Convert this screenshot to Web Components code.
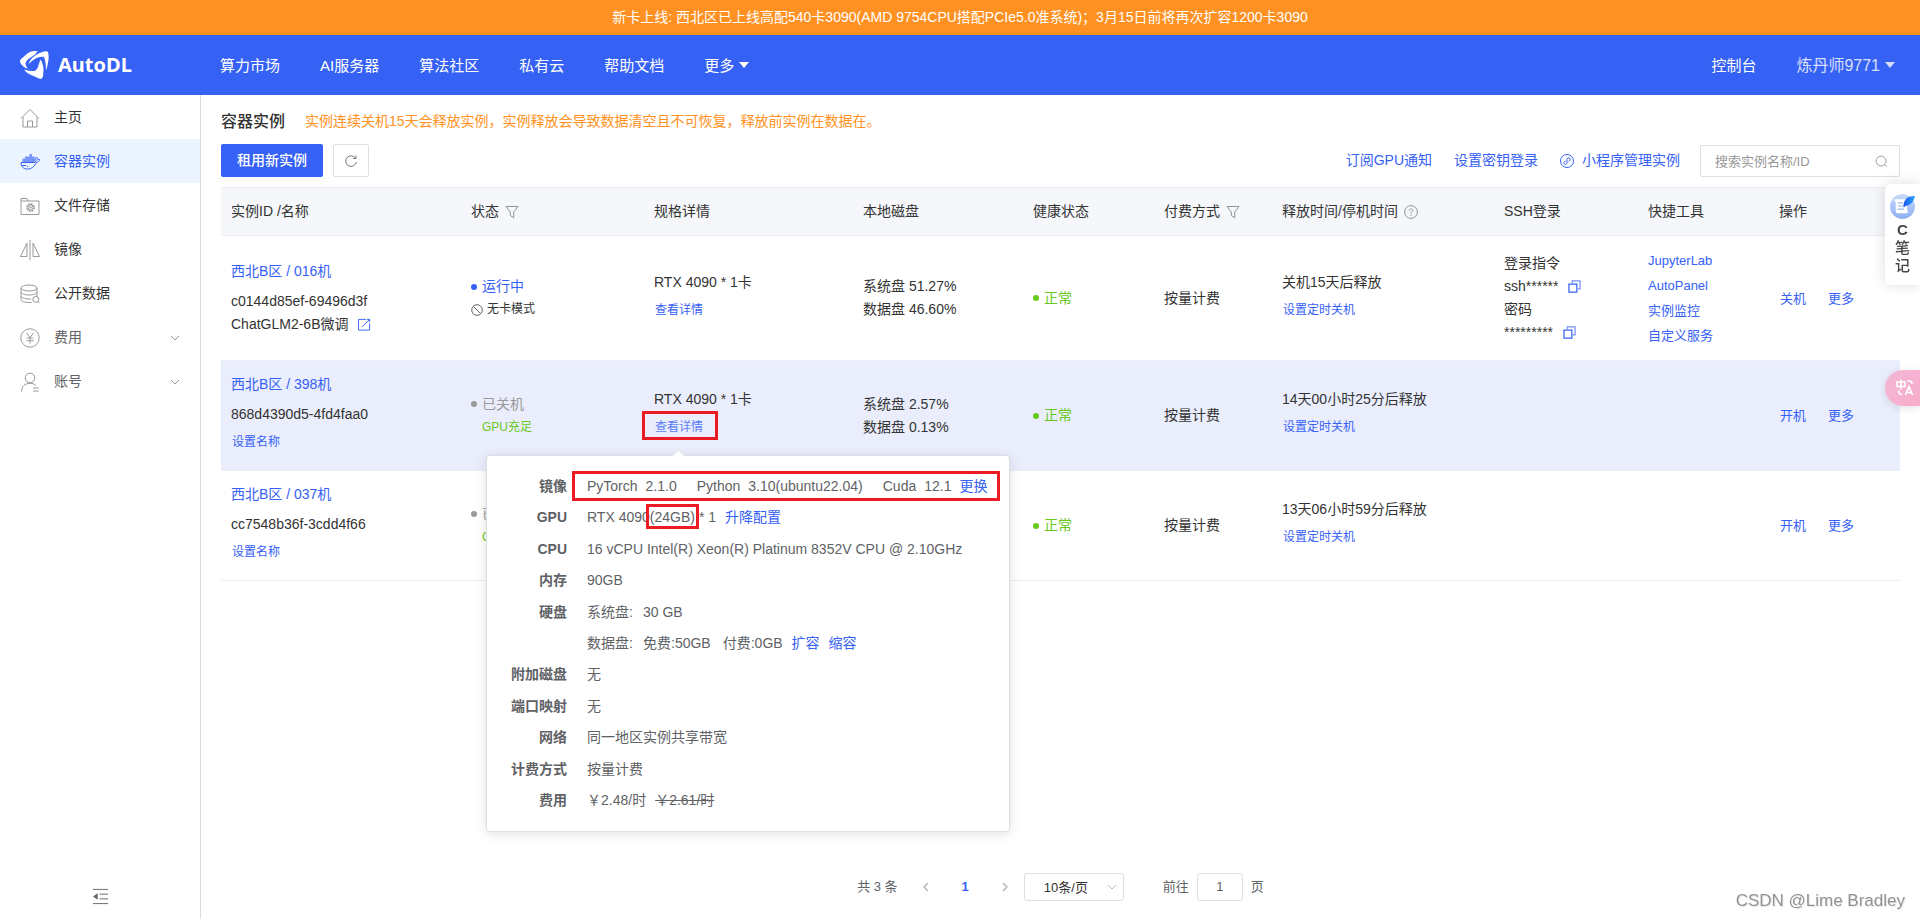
<!DOCTYPE html>
<html lang="zh-CN">
<head>
<meta charset="utf-8">
<title>AutoDL 容器实例</title>
<style>
  html, body { margin: 0; height: 100%; }
  body {
    font: 14px/23px "Liberation Sans", "Noto Sans CJK SC", sans-serif;
    color: #333;
    background: #fff;
    --brand: #3661f5;
    --line: #ebeef5;
    --border: #dcdfe6;
    --green: #67c81e;
    --mark: #ed1c24;
  }
</style>
</head>
<body>
<app-shell>
  <notice-bar slot="notice">新卡上线: 西北区已上线高配540卡3090(AMD 9754CPU搭配PCIe5.0准系统)；3月15日前将再次扩容1200卡3090</notice-bar>
  <top-nav slot="header"></top-nav>
  <side-menu slot="side">
    <side-item icon="home">主页</side-item>
    <side-item icon="docker" active>容器实例</side-item>
    <side-item icon="folder">文件存储</side-item>
    <side-item icon="mirror">镜像</side-item>
    <side-item icon="database">公开数据</side-item>
    <side-item icon="yen" expandable>费用</side-item>
    <side-item icon="user" expandable>账号</side-item>
  </side-menu>
  <page-title>
    容器实例
    <span slot="warning">实例连续关机15天会释放实例，实例释放会导致数据清空且不可恢复，释放前实例在数据在。</span>
  </page-title>
  <tool-bar></tool-bar>
  <instance-table></instance-table>
  <page-bar></page-bar>
</app-shell>
<note-widget></note-widget>
<translate-widget></translate-widget>
<water-mark>CSDN @Lime Bradley</water-mark>

<script>
const BASE = `
  :host, *, *::before, *::after { box-sizing: border-box; }
  a { color: var(--brand); text-decoration: none; }
  button, input, select { font: inherit; color: inherit; margin: 0; }
`;

function define(name, css, html) {
  customElements.define(name, class extends HTMLElement {
    constructor() {
      super();
      const root = this.attachShadow({ mode: 'open' });
      root.innerHTML = `<style>${BASE}${css}</style>` + (typeof html === 'function' ? html(this) : html);
    }
  });
}

/* ---------- icons ---------- */
const ICONS = {
  logo: ['0 0 29 28', `<g fill="currentColor" stroke="none"><path d="M18 .3Q12-1 8 2L1 8Q-1 10 1 13 3.500 16.500 8 18 5.500 15 5.500 12.500 5.500 10 8.500 8L15 3.500Q16 1.500 18 .3z"/><path d="M8.500 13Q11 6 18.500 2.500 26-1 28 .8 30 8 26 19.500 26 11 24 6 20 5 15.500 7.500 11 10.500 8.500 13z"/><path d="M4 18.500Q10 20.500 14.500 20 18 18 18.500 14L20.500 8.500Q23.500 13 23.500 19L23 25.500Q22 29 19 27.500L9 23Q5.500 21 4 18.500z"/></g>`],
  home: ['0 0 20 20', `<path d="M1 10.500 10 1.500l9 9M3 9v10h14V9M7.500 19v-6h5v6"/>`],
  docker: ['0 0 20 20', `<path d="M1 10.500h13.500c1.300-.3 1.800-1.200 1.500-2.500-.6-1.200-.4-2.200.4-3 .8.600 1.200 1.400 1.300 2.300l2 .4c-.4 1.600-1.600 2.400-3.400 2.500-1.600 4.300-4.800 6.800-9 6.800C3.500 17 1 14.500 1 10.500zM2 13.500h4M7 14.500h1"/><path fill="currentColor" fill-opacity=".65" stroke="none" d="M2.500 6.500H5V4.500h4.500V2H12v2.500h2.500v2H15v3.500H2.500z"/>`],
  folder: ['0 0 20 20', `<path d="M1 18.500v-16h6l1 2.500h11v13.500zM1 5h7"/><circle cx="10.500" cy="11.500" r="3.600" stroke-width="1.600" stroke-dasharray="1.800 1"/><circle cx="10.500" cy="11.500" r="2.600"/><circle cx="10.500" cy="11.500" r=".8"/>`],
  mirror: ['0 0 20 20', `<path d="M10 0v20M7 3v13.500H.500zM13 3v13.500h6.500z"/>`],
  database: ['0 0 20 20', `<ellipse cx="9" cy="4" rx="8" ry="3"/><path d="M1 4v11.500c0 1.700 3.600 3 8 3h2.500M17 4v8.500M1 8c0 1.700 3.600 3 8 3s8-1.300 8-3M1 12c0 1.700 3.600 3 8 3h2"/><circle cx="15.800" cy="15.300" r="3"/><path d="m18 17.500 1.500 1.500"/>`],
  yen: ['0 0 20 20', `<circle cx="10" cy="10" r="9.200"/><path d="m6.500 5 3.500 4.500L13.500 5M10 9.500V15.500M6.500 10h7M6.500 12.700h7"/>`],
  user: ['0 0 20 20', `<circle cx="10" cy="6" r="4.800"/><path d="M1.500 19.500c0-4.700 3.300-8.200 8.500-8.200 2.500 0 4.500.8 6 2.200M13 16h5.500M13 19h5.500"/>`],
  down: ['0 0 10 10', `<path d="m1 3 4 4 4-4"/>`],
  left: ['0 0 10 10', `<path d="M7 1 3 5l4 4" stroke-width="1.500"/>`],
  right: ['0 0 10 10', `<path d="m3 1 4 4-4 4" stroke-width="1.500"/>`],
  caret: ['0 0 10 6', `<path d="M0 0h10L5 6z" fill="currentColor" stroke="none"/>`],
  fold: ['0 0 18 18', `<path d="M1 1.500h16M8 6.500h9M8 11.500h9M1 16.500h16"/><path d="M1 9l5-3.500v7z" fill="currentColor" stroke="none"/>`],
  refresh: ['0 0 14 14', `<path d="M11.500 4.200A5.300 5.300 0 1 0 12.300 8M12 1.500v3H9"/>`],
  mini: ['0 0 14 14', `<circle cx="7" cy="7" r="6.500"/><path d="M8.600 7.300c2.300-.6 2-3.500.1-3.500-1 0-1.700.7-1.700 1.600v3.400c0 1-.7 1.600-1.600 1.600-2 0-2.200-2.800 0-3.400"/>`],
  search: ['0 0 14 14', `<circle cx="6.500" cy="6.500" r="5.300"/><path d="m10.500 10.500 2.300 2.300"/>`],
  filter: ['0 0 14 14', `<path d="M1 1.500h12L8.700 7v5.800L5.300 10.500V7z"/>`],
  help: ['0 0 14 14', `<circle cx="7" cy="7" r="6.400"/><path d="M5.200 5.700c0-2.400 3.600-2.400 3.600-.2C8.800 7 7 6.900 7 8.600M7 9.800V11"/>`],
  edit: ['0 0 14 14', `<path d="M8.500 1.500h-8v11.500h12V6M4.500 9.500l8.500-8.500M9.500 1.500h3v3"/>`],
  copy: ['0 0 14 14', `<path d="M1 4.500h8.500V13H1z" stroke-width="1.300"/><path d="M4.500 3.500v-2.500H13v8.500h-2.500" stroke-width="1.300" opacity=".7"/>`],
  ban: ['0 0 12 12', `<circle cx="6" cy="6" r="5.300"/><path d="m2.300 2.300 7.400 7.400"/>`]
};
customElements.define('ui-icon', class extends HTMLElement {
  constructor() {
    super();
    const [box, body] = ICONS[this.getAttribute('name')];
    const [, , w, h] = box.split(' ');
    const width = this.getAttribute('size') || w;
    this.attachShadow({ mode: 'open' }).innerHTML = `
      <style>
        :host { display: inline-flex; flex: none; width: ${width}px; }
        svg { width: 100%; aspect-ratio: ${w} / ${h}; fill: none; stroke: currentColor; stroke-width: 1; overflow: visible; }
      </style>
      <svg viewBox="${box}" aria-hidden="true">${body}</svg>`;
  }
});

/* ---------- frame ---------- */
define('app-shell', `
  :host { display: flex; flex-direction: column; min-height: 100vh; }
  .body { display: flex; flex: 1; }
  main { flex: 1; min-width: 0; display: flex; flex-direction: column; padding: 13px 20px 18px; }
`, `
  <slot name="notice"></slot>
  <slot name="header"></slot>
  <div class="body"><slot name="side"></slot><main><slot></slot></main></div>
`);

define('notice-bar', `
  :host { display: block; background: #ff9122; color: #fff; text-align: center; line-height: 35px; }
`, `<slot></slot>`);

define('top-nav', `
  :host { display: flex; align-items: center; height: 60px; padding: 0 20px; background: var(--brand); color: #fff; font-size: 15px; }
  a { color: #fff; }
  .brand { display: flex; align-items: center; gap: 9px; width: 200px; font: 700 20px/28px "Noto Sans", sans-serif; }
  nav { display: flex; gap: 40px; }
  nav.end { margin-left: auto; margin-right: 5px; }
  .menu { display: flex; align-items: center; gap: 5px; }
  .account { font-size: 16px; opacity: .8; }
`, `
  <a class="brand" href="#"><ui-icon name="logo"></ui-icon>AutoDL</a>
  <nav aria-label="主导航">
    <a href="#">算力市场</a><a href="#">AI服务器</a><a href="#">算法社区</a><a href="#">私有云</a><a href="#">帮助文档</a>
    <a href="#" class="menu">更多<ui-icon name="caret"></ui-icon></a>
  </nav>
  <nav class="end" aria-label="账户">
    <a href="#">控制台</a>
    <a href="#" class="menu account">炼丹师9771<ui-icon name="caret"></ui-icon></a>
  </nav>
`);

define('side-menu', `
  :host { display: flex; flex-direction: column; flex: none; width: 201px; border-right: 1px solid #d8dbe2; }
  button { margin: auto auto 10px; padding: 4px; border: 0; background: none; display: flex; color: #666; }
`, `<slot></slot><button aria-label="收起菜单"><ui-icon name="fold" size="17"></ui-icon></button>`);

define('side-item', `
  :host { display: block; }
  a { display: flex; align-items: center; gap: 14px; height: 44px; padding: 1px 20px 0; color: #333; }
  ui-icon { color: #999; }
  .arrow { margin-left: auto; }
  :host([expandable]) a { color: #606266; }
  :host([active]) a { background: #ecf5ff; color: var(--brand); }
  :host([active]) ui-icon { color: var(--brand); }
`, el => `<a href="#"><ui-icon name="${el.getAttribute('icon')}"></ui-icon><slot></slot>${
  el.hasAttribute('expandable') ? '<ui-icon class="arrow" name="down"></ui-icon>' : ''}</a>`);

/* ---------- page head ---------- */
define('page-title', `
  :host { display: flex; align-items: center; gap: 20px; height: 27px; }
  h1 { margin: 0; font-size: 16px; font-weight: 500; line-height: 24px; }
  p { margin: 0; color: #ff9122; }
`, `<h1><slot></slot></h1><p><slot name="warning"></slot></p>`);

define('tool-bar', `
  :host { display: flex; align-items: center; margin: 9px 0 10px; gap: 10px; }
  button { display: flex; align-items: center; justify-content: center; height: 33px; padding: 0 16px; border: 0; border-radius: 2px; background: var(--brand); color: #fff; font-weight: 500; }
  button.plain { padding: 0 10px; background: #fff; border: 1px solid var(--border); color: #777; }
  .links { display: flex; align-items: center; gap: 22px; margin-left: auto; }
  .mini { display: flex; align-items: center; gap: 8px; }
  .search { display: flex; align-items: center; align-self: flex-end; width: 200px; height: 32px; margin-left: 10px; padding: 0 11px 0 14px; border: 1px solid var(--border); border-radius: 2px; color: #999; font-size: 13px; }
  input { flex: 1; min-width: 0; padding: 0; border: 0; outline: 0; background: none; }
  input::placeholder { color: #999; opacity: 1; }
`, `
  <button>租用新实例</button>
  <button class="plain" aria-label="刷新"><ui-icon name="refresh"></ui-icon></button>
  <div class="links">
    <a href="#">订阅GPU通知</a>
    <a href="#">设置密钥登录</a>
    <a href="#" class="mini"><ui-icon name="mini"></ui-icon>小程序管理实例</a>
  </div>
  <label class="search"><input type="text" aria-label="搜索实例" placeholder="搜索实例名称/ID"><ui-icon name="search" size="13"></ui-icon></label>
`);

/* ---------- table parts ---------- */
define('status-dot', `
  :host { display: flex; align-items: center; gap: 5px; color: #999; }
  :host([tone=run]) { color: var(--brand); }
  :host([tone=ok]) { color: var(--green); }
  i { width: 6px; height: 6px; border-radius: 50%; background: currentColor; }
`, `<i></i><slot></slot>`);

define('mark-box', `
  :host { position: relative; display: block; width: fit-content; }
  i { position: absolute; border: 3px solid var(--mark); inset: -6px -15px -3px -13px; pointer-events: none; }
  :host([kind=row]) i { inset: -4px -13px -4px -15px; }
  :host([kind=tight]) i { inset: -2px -4px -1px; }
`, `<slot></slot><i></i>`);

define('detail-row', `
  :host { display: grid; grid-template-columns: 64px 1fr; column-gap: 20px; align-items: center; white-space: nowrap; }
  b { text-align: right; }
  div { display: flex; align-items: center; gap: 9px; }
`, el => `<b>${el.getAttribute('label') || ''}</b><div><slot></slot></div>`);

define('detail-popover', `
  :host { position: absolute; z-index: 10; top: 44px; left: -168px; width: 524px; height: 377px;
    display: grid; grid-auto-rows: 1fr; padding: 14px 9px 15px 16px;
    background: #fff; border: 1px solid var(--border); border-radius: 4px; box-shadow: 0 2px 12px rgba(0,0,0,.12);
    color: #606266; font-size: 14px; line-height: 22px; }
  :host::before { content: ""; position: absolute; top: -5px; left: 187px; width: 9px; height: 9px;
    background: #fff; border: solid var(--border); border-width: 1px 0 0 1px; transform: rotate(45deg); }
  .pair { display: flex; gap: 8px; }
  .image { display: flex; gap: 20px; }
  .gpu { display: flex; gap: 4px; }
  .model { display: flex; }
  .disk { width: 47px; }
  .paid { margin-left: 3px; }
`, `
  <detail-row label="镜像"><mark-box kind="row"><span class="image"><span class="pair"><span>PyTorch</span><span>2.1.0</span></span><span class="pair"><span>Python</span><span>3.10(ubuntu22.04)</span></span><span class="pair"><span>Cuda</span><span>12.1</span><a href="#">更换</a></span></span></mark-box></detail-row>
  <detail-row label="GPU"><span class="gpu"><span class="model"><span>RTX 4090</span><mark-box kind="tight"><span>(24GB)</span></mark-box></span><span>* 1</span></span><a href="#">升降配置</a></detail-row>
  <detail-row label="CPU">16 vCPU Intel(R) Xeon(R) Platinum 8352V CPU @ 2.10GHz</detail-row>
  <detail-row label="内存">90GB</detail-row>
  <detail-row label="硬盘"><span class="disk">系统盘:</span><span>30 GB</span></detail-row>
  <detail-row><span class="disk">数据盘:</span><span>免费:50GB</span><span class="paid">付费:0GB</span><a href="#">扩容</a><a href="#">缩容</a></detail-row>
  <detail-row label="附加磁盘">无</detail-row>
  <detail-row label="端口映射">无</detail-row>
  <detail-row label="网络">同一地区实例共享带宽</detail-row>
  <detail-row label="计费方式">按量计费</detail-row>
  <detail-row label="费用"><span>￥2.48/时</span><s>￥2.61/时</s></detail-row>
`);

const stoppedRow = (cls, name, id, disk, release, detail) => `
  <tr class="${cls}">
    <td><a href="#" class="zone">${name}</a><div>${id}</div><a href="#" class="sub">设置名称</a></td>
    <td><status-dot>已关机</status-dot><div class="gpu">GPU充足</div></td>
    <td>${detail}</td>
    <td>${disk}</td>
    <td><status-dot tone="ok">正常</status-dot></td>
    <td>按量计费</td>
    <td><div>${release}</div><a href="#" class="sub">设置定时关机</a></td>
    <td></td><td></td>
    <td><div class="ops"><a href="#">开机</a><a href="#">更多</a></div></td>
  </tr>`;

define('instance-table', `
  :host { display: block; }
  table { width: 100%; table-layout: fixed; border-collapse: separate; border-spacing: 0; border-top: 1px solid var(--line); }
  th, td { padding: 12px 0 12px 10px; text-align: left; border-bottom: 1px solid var(--line); white-space: nowrap; }
  th { background: #f5f7fa; font-weight: 400; }
  th span { display: flex; align-items: center; gap: 6px; }
  th ui-icon { color: #909399; }
  .current td { background: #eaeefc; }
  .zone { display: block; margin-bottom: 7px; }
  .sub { display: block; width: fit-content; font-size: 12px; line-height: 32px; padding-left: 1px; }
  .gpu { padding-left: 11px; font-size: 12px; color: var(--green); }
  .mode { display: flex; align-items: center; gap: 4px; font-size: 12px; }
  .mode ui-icon { color: #666; }
  .with-icon { display: flex; align-items: center; gap: 10px; }
  .with-icon ui-icon { color: var(--brand); }
  .tools { display: grid; font-size: 13px; line-height: 25px; }
  .ops { display: flex; gap: 22px; padding-left: 1px; font-size: 13px; }
  .anchor { position: relative; width: fit-content; padding: 6px 0 6px 1px; }
  .anchor a { display: block; font-size: 12px; line-height: 20px; opacity: .8; }
`, `
  <table>
    <colgroup>
      <col style="width:240px"><col style="width:183px"><col style="width:209px"><col style="width:170px"><col style="width:131px">
      <col style="width:118px"><col style="width:222px"><col style="width:144px"><col style="width:131px"><col style="width:131px">
    </colgroup>
    <thead>
      <tr>
        <th>实例ID /名称</th>
        <th><span>状态<ui-icon name="filter"></ui-icon></span></th>
        <th>规格详情</th>
        <th>本地磁盘</th>
        <th>健康状态</th>
        <th><span>付费方式<ui-icon name="filter"></ui-icon></span></th>
        <th><span>释放时间/停机时间<ui-icon name="help"></ui-icon></span></th>
        <th>SSH登录</th>
        <th>快捷工具</th>
        <th>操作</th>
      </tr>
    </thead>
    <tbody>
      <tr>
        <td><a href="#" class="zone">西北B区 / 016机</a><div>c0144d85ef-69496d3f</div><div class="with-icon">ChatGLM2-6B微调<ui-icon name="edit" size="13"></ui-icon></div></td>
        <td><status-dot tone="run">运行中</status-dot><div class="mode"><ui-icon name="ban"></ui-icon>无卡模式</div></td>
        <td><div>RTX 4090 * 1卡</div><a href="#" class="sub">查看详情</a></td>
        <td><div>系统盘 51.27%</div><div>数据盘 46.60%</div></td>
        <td><status-dot tone="ok">正常</status-dot></td>
        <td>按量计费</td>
        <td><div>关机15天后释放</div><a href="#" class="sub">设置定时关机</a></td>
        <td>
          <div>登录指令</div><div class="with-icon">ssh******<ui-icon name="copy" size="13"></ui-icon></div>
          <div>密码</div><div class="with-icon">*********<ui-icon name="copy" size="13"></ui-icon></div>
        </td>
        <td><div class="tools"><a href="#">JupyterLab</a><a href="#">AutoPanel</a><a href="#">实例监控</a><a href="#">自定义服务</a></div></td>
        <td><div class="ops"><a href="#">关机</a><a href="#">更多</a></div></td>
      </tr>
      ${stoppedRow('current', '西北B区 / 398机', '868d4390d5-4fd4faa0', '<div>系统盘 2.57%</div><div>数据盘 0.13%</div>', '14天00小时25分后释放',
        '<div>RTX 4090 * 1卡</div><div class="anchor"><mark-box><a href="#">查看详情</a></mark-box><detail-popover></detail-popover></div>')}
      ${stoppedRow('', '西北B区 / 037机', 'cc7548b36f-3cdd4f66', '', '13天06小时59分后释放', '')}
    </tbody>
  </table>
`);

/* ---------- pagination ---------- */
define('page-bar', `
  :host { display: flex; justify-content: center; align-items: center; height: 28px; margin-top: auto; font-size: 13px; line-height: 28px; color: #606266; }
  .step { display: flex; padding: 0; border: 0; background: none; color: #b4b8c0; }
  nav { display: flex; align-items: center; gap: 31px; margin: 0 14px 0 23px; }
  nav a { font-weight: 700; }
  .size { position: relative; display: flex; align-items: center; }
  select { width: 100px; height: 28px; padding: 0 0 0 19px; appearance: none; border: 1px solid var(--border); border-radius: 3px; background: #fff; color: #333; }
  .size ui-icon { position: absolute; right: 7px; color: #b4b8c0; pointer-events: none; }
  .jump { display: flex; gap: 8px; margin-left: 39px; }
  input { width: 46px; height: 28px; padding: 0; text-align: center; border: 1px solid var(--border); border-radius: 3px; }
`, `
  <span>共 3 条</span>
  <nav aria-label="分页">
    <button class="step" aria-label="上一页"><ui-icon name="left"></ui-icon></button>
    <a href="#">1</a>
    <button class="step" aria-label="下一页"><ui-icon name="right"></ui-icon></button>
  </nav>
  <span class="size"><select aria-label="每页条数"><option>10条/页</option></select><ui-icon name="down"></ui-icon></span>
  <label class="jump">前往 <input type="text" value="1"> 页</label>
`);

/* ---------- floating widgets ---------- */
define('note-widget', `
  :host { position: fixed; right: 0; top: 184px; z-index: 20; width: 35px; padding: 10px 0; border-radius: 6px 0 0 6px;
    background: #fff; box-shadow: 0 0 14px rgba(0,0,0,.14); text-align: center; font-weight: 500; color: #444; font-size: 15px; line-height: 18px; }
  svg { display: block; width: 25px; margin: 0 auto 2px; }
  span { display: block; }
  b { display: block; }
`, `
  <svg viewBox="0 0 24 24" aria-hidden="true">
    <defs><linearGradient id="disc" x2="0" y2="1"><stop stop-color="#c9d9fa"/><stop offset="1" stop-color="#8db0f3"/></linearGradient>
    <linearGradient id="quill" x2="1"><stop stop-color="#1d55e8"/><stop offset="1" stop-color="#27a5ff"/></linearGradient></defs>
    <circle cx="12" cy="12" r="12" fill="url(#disc)"/>
    <path d="M4 5h11q1.500 0 1.500 1.500V16h1q0 2.500-2 2.500H8Q5.500 18.500 5.500 16V7.500Q4 7 4 5z" fill="#fff"/>
    <path d="M7.500 8.500h5M7.500 11.500h5M7.500 14.500h6" stroke="#9ab8f4"/>
    <path d="M24 2q-8-.5-10.500 6-.8 2.500-.5 5l2-1.500Q22 11 24 2z" fill="url(#quill)"/>
  </svg>
  <b>C</b><span>笔</span><span>记</span>
`);

define('translate-widget', `
  :host { position: fixed; right: 0; top: 370px; z-index: 20; width: 35px; height: 36px; padding: 9px 0 0 11px; border-radius: 18px 0 0 18px;
    background: linear-gradient(135deg, #f4b4d4, #f7a8c8); box-shadow: 0 2px 10px rgba(0,0,0,.12); opacity: .95; }
  svg { display: block; width: 18px; fill: none; stroke: #fff; stroke-width: 1.600; }
`, `
  <svg viewBox="0 0 18 17" aria-hidden="true"><path d="M1 3h8v4.500H1zM5 .5v10M11.500 2h2q2.500 0 2.500 3M2.500 11.500q0 4 4 4M9.500 16l3.500-8.500 3.500 8.500M10.800 13.500h4.400"/></svg>
`);

define('water-mark', `
  :host { position: fixed; right: 15px; bottom: 6px; font-size: 17px; line-height: 24px; color: #939393; text-shadow: 1px 1px 0 #e8e8e8; }
`, `<slot></slot>`);
</script>
</body>
</html>
